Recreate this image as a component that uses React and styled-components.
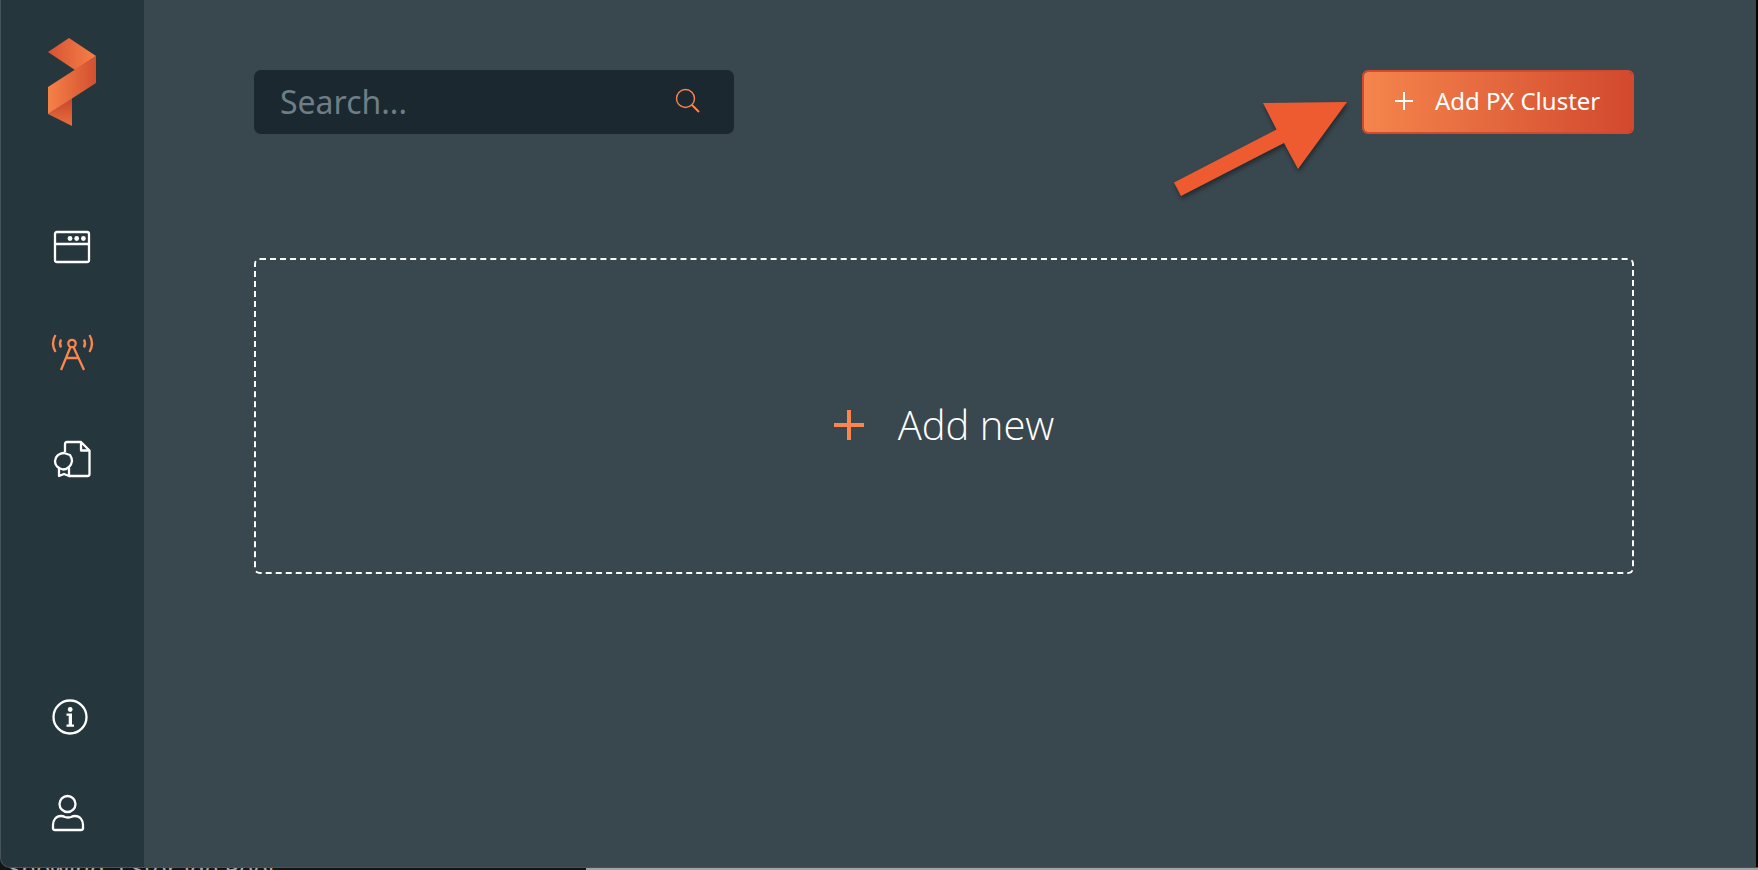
import React from "react";
import styled, { createGlobalStyle } from "styled-components";

const GlobalStyle = createGlobalStyle`
  * { box-sizing: border-box; }
  html, body { margin: 0; }
  body {
    background: #141414;
    color: #fff;
    font-family: "Noto Sans", "Open Sans", sans-serif;
  }
  svg { display: block; }
`;

const Desktop = styled.div`
  display: flex;
  flex-direction: column;
  height: 100vh;
  overflow: hidden;
`;

const Window = styled.div`
  flex: 1;
  min-height: 0;
  display: flex;
  background: #39474e;
  border: solid #45535a;
  border-width: 0 0 1px 1px;
  border-radius: 0 0 0 10px;
  box-shadow: inset -2px 0 0 #000;
  overflow: hidden;
`;

const Sidebar = styled.nav`
  flex: none;
  width: 143px;
  display: flex;
  flex-direction: column;
  background: #26363d;
  padding: 38px 0 34px 47px;
`;

const NavGroup = styled.div`
  display: flex;
  flex-direction: column;
  gap: ${(p) => p.$gap}px;
  margin-top: ${(p) => p.$top};
`;

const NavLink = styled.a`
  display: block;
  width: 48px;
  color: ${(p) => (p.$active ? "#fb864d" : "#fff")};
`;

const Main = styled.main`
  flex: 1;
  padding: 70px 124px 0 110px;
`;

const Toolbar = styled.div`
  position: relative;
  display: flex;
  justify-content: space-between;
`;

const SearchBox = styled.label`
  display: flex;
  align-items: center;
  width: 480px;
  height: 64px;
  padding: 0 33px 2px 26px;
  border-radius: 7px;
  background: #1b282f;
`;

const SearchInput = styled.input`
  flex: 1;
  min-width: 0;
  padding: 0;
  border: 0;
  outline: 0;
  background: none;
  color: #fff;
  font: 32px "Noto Sans", "Open Sans", sans-serif;
  &::placeholder { color: #6d7e86; opacity: 1; }
`;

const PrimaryButton = styled.button`
  display: flex;
  align-items: center;
  gap: 22px;
  width: 272px;
  height: 64px;
  padding: 0 0 3px 31px;
  border: 2px solid #d2492e;
  border-radius: 6px;
  background: linear-gradient(90deg, #f5854c, #d2492e) padding-box;
  color: #fff;
  font: 24px "Noto Sans", "Open Sans", sans-serif;
  white-space: nowrap;
`;

const Pointer = styled.svg`
  position: absolute;
  top: 20px;
  right: 276px;
  pointer-events: none;
  filter: drop-shadow(1px 3px 2px rgba(0, 0, 0, 0.4));
`;

const AddCard = styled.button`
  display: flex;
  align-items: center;
  justify-content: center;
  gap: 34px;
  width: 100%;
  height: 316px;
  margin-top: 124px;
  padding: 17px 0 0;
  border: 2px dashed #fff;
  border-radius: 6px;
  background: none;
  color: #fff;
  font: 300 40px "Open Sans", "Noto Sans", sans-serif;
`;

const Behind = styled.footer`
  flex: none;
  display: flex;
  align-items: center;
  height: 2px;
  padding-left: 8px;
  overflow: hidden;
  background: linear-gradient(90deg, #141414 586px, #a2a2a2 586px);
  color: #aaa;
  font-size: 24px;
  line-height: 32px;
  white-space: nowrap;
`;

const Logo = () => (
  <svg width="48" height="88" viewBox="0 0 48 88" role="img" aria-label="Portworx">
    <defs>
      <linearGradient id="top"><stop stopColor="#d85234" /><stop offset="1" stopColor="#f68148" /></linearGradient>
      <linearGradient id="band"><stop stopColor="#f68148" /><stop offset="1" stopColor="#d3502f" /></linearGradient>
      <linearGradient id="tail" x2="0" y2="1"><stop stopColor="#c8452b" /><stop offset="1" stopColor="#e86f3d" /></linearGradient>
    </defs>
    <path d="M0 14 21 0 48 18 27 32Z" fill="url(#top)" />
    <path d="M24 60V88L0 76Z" fill="url(#tail)" />
    <path d="M48 18V45L0 76V49Z" fill="url(#band)" />
  </svg>
);

const WindowIcon = () => (
  <svg width="48" height="36" viewBox="0 0 48 36" fill="none" stroke="currentColor" strokeWidth="2.3">
    <rect x="7" y="3" width="34" height="30" rx="2" />
    <path d="M7 15H41" />
    <g fill="currentColor" stroke="none"><circle cx="22" cy="9.5" r="2.4" /><circle cx="28.7" cy="9.5" r="2.4" /><circle cx="35.4" cy="9.5" r="2.4" /></g>
  </svg>
);

const AntennaIcon = () => (
  <svg width="48" height="40" viewBox="0 0 48 40" fill="none" stroke="currentColor" strokeWidth="2.3">
    <circle cx="24" cy="11.5" r="3.7" />
    <path d="M22.500 15 13 38M25.500 15 36 38M18 26H31" />
    <path d="M7.500 3Q2.500 11.500 7.500 20M13 7.500Q11 11.500 13 15.500M36 7.500Q38 11.500 36 15.500M41.500 3Q46.500 11.500 41.500 20" />
  </svg>
);

const LicenseIcon = () => (
  <svg width="48" height="40" viewBox="0 0 48 40" fill="none" stroke="currentColor" strokeWidth="2.3" strokeLinejoin="round">
    <path d="M17 13V5Q17 3 19 3H33L41.500 11.500V35Q41.500 37 39.500 37H21M33 3V11.500H41.500" />
    <path d="M16 14 19 15 22 16 23.500 19 24 22 23 25.500 21 28 18 30 15 30.500 12 29.500 9 27.500 7.500 25 7 22 8 18.500 10 16 13 14.500Z" />
    <path d="M11 29V37L16 35 21 37V29" />
  </svg>
);

const InfoIcon = () => (
  <svg width="48" height="36" viewBox="0 0 48 36">
    <circle cx="22" cy="18" r="16.500" fill="none" stroke="currentColor" strokeWidth="2.300" />
    <circle cx="22.200" cy="10.500" r="2.400" fill="currentColor" />
    <path d="M18.500 14.500H24V25.500H26V27.700H18.500V25.500H20.700V16.700H18.500Z" fill="currentColor" />
  </svg>
);

const UserIcon = () => (
  <svg width="48" height="40" viewBox="0 0 48 40" fill="none" stroke="currentColor" strokeWidth="2.3">
    <circle cx="19.500" cy="11" r="8" />
    <path d="M5 35V32C5 27 8 23 13 23Q15 23 17 24Q20 25 23 24Q25 23 27 23C32 23 35 27 35 32V35Q35 37 33 37H7Q5 37 5 35Z" />
  </svg>
);

const SearchIcon = () => (
  <svg width="26" height="26" viewBox="0 0 26 26" fill="none" stroke="#fb864d">
    <circle cx="10.500" cy="10.500" r="9" strokeWidth="1.400" />
    <path d="M17 17 24 24" strokeWidth="2" />
  </svg>
);

const Plus = ({ size, weight, color }) => (
  <svg width={size} height={size} viewBox={`0 0 ${size} ${size}`} stroke={color} strokeWidth={weight}>
    <path d={`M0 ${size / 2}H${size}M${size / 2} 0V${size}`} />
  </svg>
);

export default function App() {
  return (
    <Desktop>
      <GlobalStyle />
      <Window>
        <Sidebar>
          <Logo />
          <NavGroup $gap={67} $top="103px">
            <NavLink href="#clusters" aria-label="Clusters"><WindowIcon /></NavLink>
            <NavLink href="#discovery" aria-label="Discovery" $active><AntennaIcon /></NavLink>
            <NavLink href="#licenses" aria-label="Licenses"><LicenseIcon /></NavLink>
          </NavGroup>
          <NavGroup $gap={58} $top="auto">
            <NavLink href="#about" aria-label="About"><InfoIcon /></NavLink>
            <NavLink href="#profile" aria-label="Profile"><UserIcon /></NavLink>
          </NavGroup>
        </Sidebar>
        <Main>
          <Toolbar>
            <SearchBox>
              <SearchInput type="text" placeholder="Search..." aria-label="Search" />
              <SearchIcon />
            </SearchBox>
            <PrimaryButton type="button">
              <Plus size={18} weight={2} color="#fff" />
              Add PX Cluster
            </PrimaryButton>
            <Pointer width="190" height="110" viewBox="0 0 190 110" aria-hidden="true">
              <path d="M6 92.500 108.500 39.500 95 13 179 12 130 79 116 53 13 106Z" fill="#ef5b30" />
            </Pointer>
          </Toolbar>
          <AddCard type="button">
            <Plus size={30} weight={4} color="#fb864d" />
            Add new
          </AddCard>
        </Main>
      </Window>
      <Behind>Showing a Storage Pool</Behind>
    </Desktop>
  );
}
